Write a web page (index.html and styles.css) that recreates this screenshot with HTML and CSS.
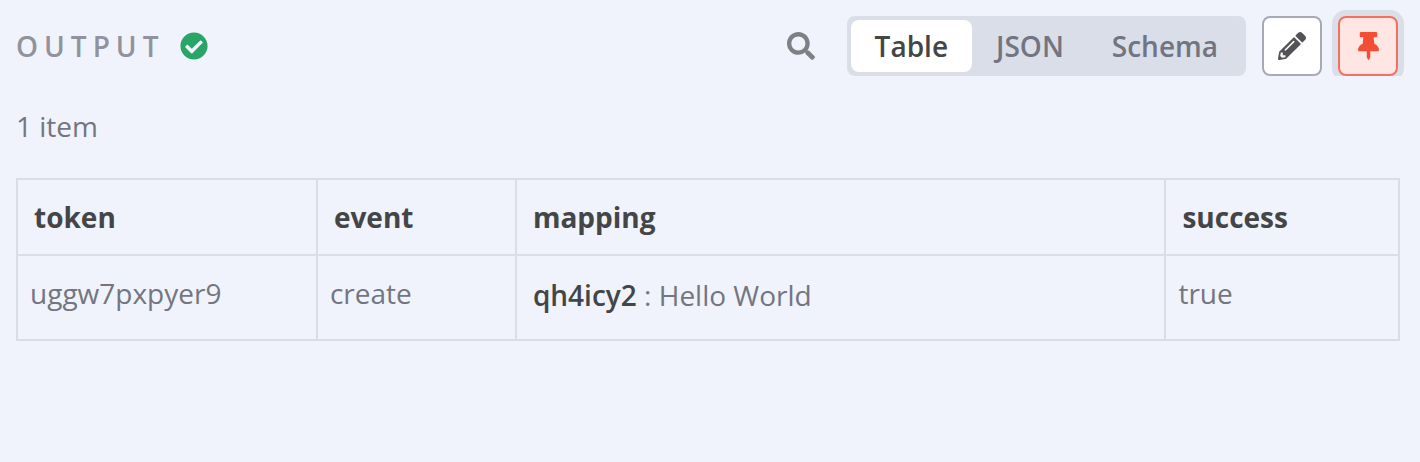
FILE: index.html
```html
<!DOCTYPE html>
<html lang="en">
<head>
    <meta charset="UTF-8">
    <meta name="viewport" content="width=device-width, initial-scale=1.0">
    <title>Output</title>
    <link rel="stylesheet" href="styles.css">
</head>
<body>
<header class="panel-header">
    <h1 class="panel-title">OUTPUT</h1>
    <svg class="icon status-icon" viewBox="0 0 512 512" role="img" aria-label="Success">
        <path d="M504 256c0 136.967-111.033 248-248 248S8 392.967 8 256 119.033 8 256 8s248 111.033 248 248zM227.314 387.314l184-184c6.248-6.248 6.248-16.379 0-22.627l-22.627-22.627c-6.248-6.249-16.379-6.249-22.628 0L216 308.118l-70.059-70.059c-6.248-6.248-16.379-6.248-22.628 0l-22.627 22.627c-6.248 6.248-6.248 16.379 0 22.627l104 104c6.249 6.249 16.379 6.249 22.628.001z"/>
    </svg>

    <div class="toolbar">
        <button class="search-button" type="button" aria-label="Search output">
            <svg class="icon" viewBox="0 0 512 512" aria-hidden="true">
                <path d="M505 442.7L405.3 343c-4.5-4.5-10.6-7-17-7H372c27.6-35.3 44-79.7 44-128C416 93.1 322.9 0 208 0S0 93.1 0 208s93.1 208 208 208c48.3 0 92.7-16.4 128-44v16.3c0 6.4 2.5 12.5 7 17l99.7 99.7c9.4 9.4 24.6 9.4 33.9 0l28.3-28.3c9.4-9.4 9.4-24.6.1-34zM208 336c-70.7 0-128-57.2-128-128 0-70.7 57.2-128 128-128 70.7 0 128 57.2 128 128 0 70.7-57.2 128-128 128z"/>
            </svg>
        </button>
        <div class="view-switch" role="tablist" aria-label="Display mode">
            <button class="view-tab active" type="button" role="tab" aria-selected="true">Table</button>
            <button class="view-tab" type="button" role="tab" aria-selected="false">JSON</button>
            <button class="view-tab" type="button" role="tab" aria-selected="false">Schema</button>
        </div>
        <button class="icon-button" type="button" aria-label="Edit output">
            <svg class="icon" viewBox="0 0 512 512" aria-hidden="true">
                <path d="M497.9 142.1l-46.1 46.1c-4.7 4.7-12.3 4.7-17 0l-111-111c-4.7-4.7-4.7-12.3 0-17l46.1-46.1c18.7-18.7 49.1-18.7 67.9 0l60.1 60.1c18.8 18.7 18.8 49.1 0 67.9zM284.2 99.8L21.6 362.4.4 483.9c-2.9 16.4 11.4 30.6 27.8 27.8l121.5-21.3 262.6-262.6c4.7-4.7 4.7-12.3 0-17l-111-111c-4.8-4.7-12.4-4.7-17.1 0zM124.1 339.9c-5.5-5.5-5.5-14.3 0-19.8l154-154c5.5-5.5 14.3-5.5 19.8 0s5.5 14.3 0 19.8l-154 154c-5.5 5.5-14.3 5.5-19.8 0zM88 424h48v36.3l-64.5 11.3-31.1-31.1L51.7 376H88v48z"/>
            </svg>
        </button>
        <button class="icon-button pinned" type="button" aria-label="Unpin data" aria-pressed="true">
            <svg class="icon" viewBox="0 0 384 512" aria-hidden="true">
                <path d="M298.028 214.267L285.793 96H328c13.255 0 24-10.745 24-24V24c0-13.255-10.745-24-24-24H56C42.745 0 32 10.745 32 24v48c0 13.255 10.745 24 24 24h42.207L85.972 214.267C37.465 236.82 0 277.261 0 328c0 13.255 10.745 24 24 24h136v104.007c0 1.242.289 2.467.845 3.578l24 48c2.941 5.882 11.364 5.893 14.311 0l24-48a8.008 8.008 0 0 0 .845-3.578V352h136c13.255 0 24-10.745 24-24-.001-51.183-37.983-91.42-85.973-113.733z"/>
            </svg>
        </button>
    </div>
</header>

<main>
    <p class="item-count">1 item</p>
    <table class="data-table">
        <thead>
            <tr>
                <th class="col-token" scope="col">token</th>
                <th class="col-event" scope="col">event</th>
                <th class="col-mapping" scope="col">mapping</th>
                <th scope="col">success</th>
            </tr>
        </thead>
        <tbody>
            <tr>
                <td>uggw7pxpyer9</td>
                <td>create</td>
                <td class="nested"><span class="key">qh4icy2</span> : Hello World</td>
                <td>true</td>
            </tr>
        </tbody>
    </table>
</main>
</body>
</html>
```
FILE: styles.css
```css
* {
    box-sizing: border-box;
}
body {
    margin: 0;
    padding: 16px 20px 16px 16px;
    background-color: #f0f3fb;
    color: #737680;
    font-family: "Open Sans", sans-serif;
    font-size: 28px;
    line-height: 36px;
}
button {
    padding: 0;
    border: none;
    background: none;
    color: inherit;
    font: inherit;
    cursor: pointer;
}
.icon {
    display: block;
    height: 28px;
    fill: currentColor;
}
.panel-header {
    display: flex;
    align-items: center;
    clip-path: inset(-16px -16px 0 -16px); /* Cut the focus ring at the bottom edge */
}
.panel-title {
    margin: 0;
    color: #90939e;
    font-size: 28px;
    font-weight: 600;
    letter-spacing: 6px;
}
.status-icon {
    margin-left: 16px;
    color: #29a568;
}
.toolbar {
    display: flex;
    align-items: center;
    gap: 16px;
    margin-left: auto;
    padding-right: 2px;
}
.search-button {
    padding: 16px;
    color: #7f8084;
}
/* Table / JSON / Schema switch */
.view-switch {
    display: flex;
    padding: 4px;
    border-radius: 8px;
    background-color: #dadee9;
}
.view-tab {
    height: 52px;
    padding: 0 24px;
    border-radius: 8px;
    color: #717581;
    font-weight: 600;
}
.view-tab.active {
    background-color: #fff;
    color: #444547;
}
.icon-button {
    display: flex;
    align-items: center;
    justify-content: center;
    width: 60px;
    height: 60px;
    border: 2px solid #a5a9b8;
    border-radius: 8px;
    background-color: #fff;
    color: #525356;
}
.icon-button.pinned {
    border-color: #f37060;
    background-color: #ffe6e2;
    color: #f24d35;
    box-shadow: 0 0 0 6px #dadee9;
}
.item-count {
    margin: 32px 0 34px;
}
/* Output data */
.data-table {
    width: 100%;
    border-collapse: collapse;
    table-layout: fixed;
}
.data-table th,
.data-table td {
    border: 2px solid #dadde9;
    text-align: left;
    vertical-align: top;
}
.data-table th {
    padding: 19px 16px;
    color: #444547;
    font-weight: 700;
}
.data-table td {
    padding: 19px 12px 28px;
}
.data-table .nested {
    padding: 21px 16px 26px;
}
.col-token {
    width: 21.7%;
}
.col-event {
    width: 14.4%;
}
.col-mapping {
    width: 47%;
}
.key {
    color: #444547;
    font-weight: 600;
}
```
